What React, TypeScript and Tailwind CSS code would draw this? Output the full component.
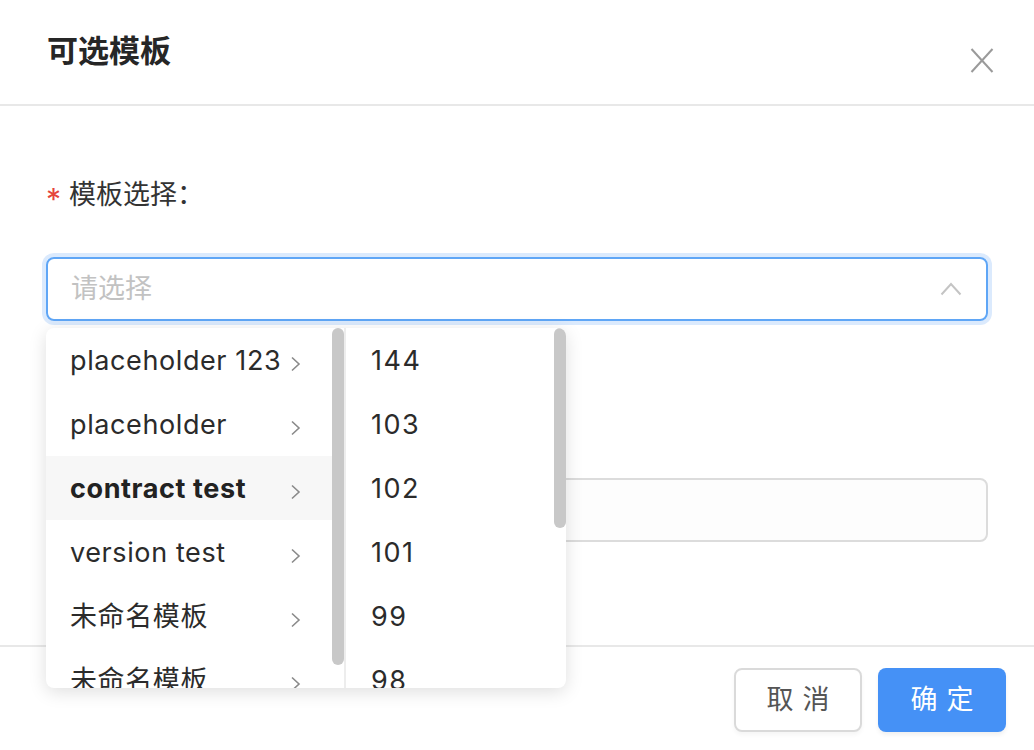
import React from 'react';

const font = 'font-["Inter","Noto_Sans_CJK_SC",sans-serif]';

const templates = [
  { name: 'placeholder 123' },
  { name: 'placeholder' },
  { name: 'contract test', active: true },
  { name: 'version test' },
  { name: '未命名模板' },
  { name: '未命名模板' },
];

const versions = ['144', '103', '102', '101', '99', '98'];

const Chevron: React.FC = () => (
  <svg width="12" height="16" viewBox="0 0 12 16" className="mt-[4px] shrink-0">
    <polyline points="2,1.5 9,8 2,14.5" fill="none" stroke="#8a8a8a" strokeWidth="1.6" />
  </svg>
);

const App: React.FC = () => {
  return (
    <div className={`w-[1034px] h-[750px] bg-white relative flex flex-col overflow-hidden ${font} text-[#2b2b2b]`}>
      {/* Header */}
      <div className="h-[106px] shrink-0 border-b-2 border-[#e8e8e8] flex items-start justify-between pl-[47px] pr-[40px]">
        <h2 className="mt-[30px] text-[31px] leading-[42px] font-bold text-[#262626]">可选模板</h2>
        <button className="mt-[48px] w-[24px] h-[25px]">
          <svg width="24" height="25" viewBox="0 0 24 25">
            <line x1="1.5" y1="1" x2="22.5" y2="24" stroke="#9a9a9a" strokeWidth="2" />
            <line x1="22.5" y1="1" x2="1.5" y2="24" stroke="#9a9a9a" strokeWidth="2" />
          </svg>
        </button>
      </div>

      {/* Body */}
      <div className="flex-1 px-[46px] pt-[73px]">
        <label className="flex items-center h-[32px] text-[27px] text-[#333]">
          <span className="text-[#e5453c] mr-[8px] text-[30px] leading-none mt-[8px]">*</span>
          模板选择：
        </label>
        <div className="mt-[46px] h-[64px] rounded-[8px] border-2 border-[#5fa6f6] ring-4 ring-[#dbeafd] flex items-center justify-between pl-[23px] pr-[24px]">
          <span className="text-[27px] text-[#c2c2c2]">请选择</span>
          <svg width="22" height="14" viewBox="0 0 22 14">
            <polyline points="1.5,12.5 11,2 20.5,12.5" fill="none" stroke="#c4c4c4" strokeWidth="2" />
          </svg>
        </div>

        {/* second field, mostly covered by the open dropdown */}
        <div className="mt-[157px] h-[64px] rounded-[8px] border-2 border-[#dcdcdc] bg-[#fdfdfd]"></div>
      </div>

      {/* Footer */}
      <div className="h-[105px] shrink-0 border-t-2 border-[#e8e8e8] flex justify-end items-start gap-[16px] pt-[21px] pr-[28px]">
        <button className="w-[128px] h-[64px] rounded-[8px] border-2 border-[#dadada] bg-white text-[27px] text-[#555] tracking-[9px] pl-[9px] shadow-[0_3px_4px_rgba(0,0,0,0.04)]">
          取消
        </button>
        <button className="w-[128px] h-[64px] rounded-[8px] bg-[#4591f6] text-[27px] text-white tracking-[9px] pl-[9px] shadow-[0_3px_4px_rgba(0,0,0,0.06)]">
          确定
        </button>
      </div>

      {/* Cascader dropdown */}
      <div className="absolute left-[46px] top-[328px] w-[520px] h-[360px] bg-white rounded-[8px] overflow-hidden shadow-[0_4px_18px_rgba(0,0,0,0.13)] flex">
        <div className="relative w-[298px] h-full">
          {templates.map((t, i) => (
            <div
              key={i}
              className={`h-[64px] flex items-center justify-between pl-[24px] pr-[42px] pt-[3px] text-[27px] tracking-[0.6px] ${t.active ? 'bg-[#f7f7f7] font-bold text-[#222]' : ''}`}
            >
              <span className="whitespace-nowrap">{t.name}</span>
              <Chevron />
            </div>
          ))}
          <div className="absolute right-0 top-0 w-[12px] h-[337px] rounded-full bg-[#c8c8c8]"></div>
        </div>
        <div className="w-[2px] h-full bg-[#ededed]"></div>
        <div className="relative flex-1 h-full">
          {versions.map((v) => (
            <div key={v} className="h-[64px] flex items-center pl-[25px] pt-[3px] text-[27px] tracking-[1.5px]">
              {v}
            </div>
          ))}
          <div className="absolute right-0 top-0 w-[12px] h-[200px] rounded-full bg-[#c8c8c8]"></div>
        </div>
      </div>
    </div>
  );
};

export default App;
